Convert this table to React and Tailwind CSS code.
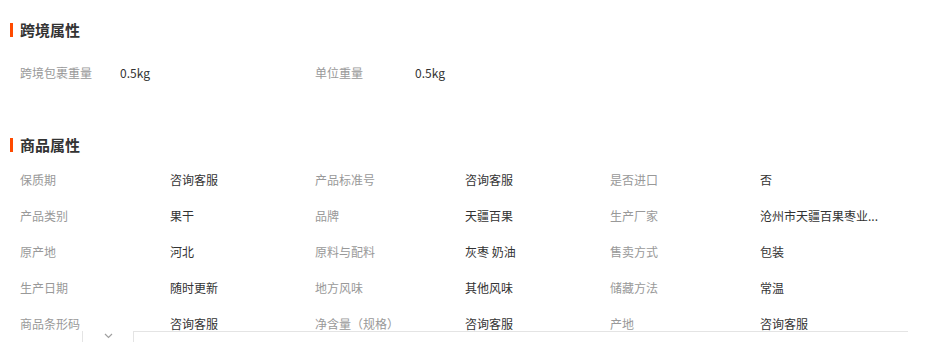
import React from 'react';

const crossAttrs = [
  { label: '跨境包裹重量', value: '0.5kg' },
  { label: '单位重量', value: '0.5kg' },
];

const goodsAttrs = [
  { label: '保质期', value: '咨询客服' },
  { label: '产品标准号', value: '咨询客服' },
  { label: '是否进口', value: '否' },
  { label: '产品类别', value: '果干' },
  { label: '品牌', value: '天疆百果' },
  { label: '生产厂家', value: '沧州市天疆百果枣业...' },
  { label: '原产地', value: '河北' },
  { label: '原料与配料', value: '灰枣 奶油' },
  { label: '售卖方式', value: '包装' },
  { label: '生产日期', value: '随时更新' },
  { label: '地方风味', value: '其他风味' },
  { label: '储藏方法', value: '常温' },
  { label: '商品条形码', value: '咨询客服' },
  { label: '净含量（规格）', value: '咨询客服' },
  { label: '产地', value: '咨询客服' },
];

const SectionTitle = ({ children }) => (
  <div className="flex items-center h-5 pl-[10px]">
    <span className="w-[3px] h-[14px] bg-[#ff4a00] mr-[7px]"></span>
    <span className="text-[15px] font-bold text-[#333]">{children}</span>
  </div>
);

const App = () => {
  return (
    <div
      className="relative w-[933px] h-[342px] overflow-hidden bg-white"
      style={{ fontFamily: '"Noto Sans CJK SC", "Noto Sans", sans-serif' }}
    >
      <div className="pt-5">
        <SectionTitle>跨境属性</SectionTitle>

        <div className="mt-[15px] pl-5 grid grid-cols-[295px_295px]">
          {crossAttrs.map((a) => (
            <div key={a.label} className="flex items-center h-9 text-xs">
              <span className="w-[100px] text-[#999]">{a.label}</span>
              <span className="text-[#333]">{a.value}</span>
            </div>
          ))}
        </div>

        <div className="mt-[44px]">
          <SectionTitle>商品属性</SectionTitle>
        </div>

        <div className="mt-[7px] pl-5 grid grid-cols-[295px_295px_295px]">
          {goodsAttrs.map((a) => (
            <div key={a.label} className="flex items-center h-9 text-xs">
              <span className="w-[150px] text-[#999]">{a.label}</span>
              <span className="whitespace-nowrap text-[#333]">{a.value}</span>
            </div>
          ))}
        </div>
      </div>

      {/* collapse mask */}
      <div className="absolute left-[82px] top-[331px] right-[25px] h-[11px] flex">
        <div className="w-[52px] h-full border-x border-[#e4e4e4] bg-white flex justify-center pt-[2px]">
          <svg width="9" height="6" viewBox="0 0 9 6" fill="none">
            <path d="M1 1 L4.5 4.5 L8 1" stroke="#a0a0a0" strokeWidth="1.2" />
          </svg>
        </div>
        <div className="flex-1 border-t border-[#e4e4e4]"></div>
      </div>
    </div>
  );
};

export default App;
